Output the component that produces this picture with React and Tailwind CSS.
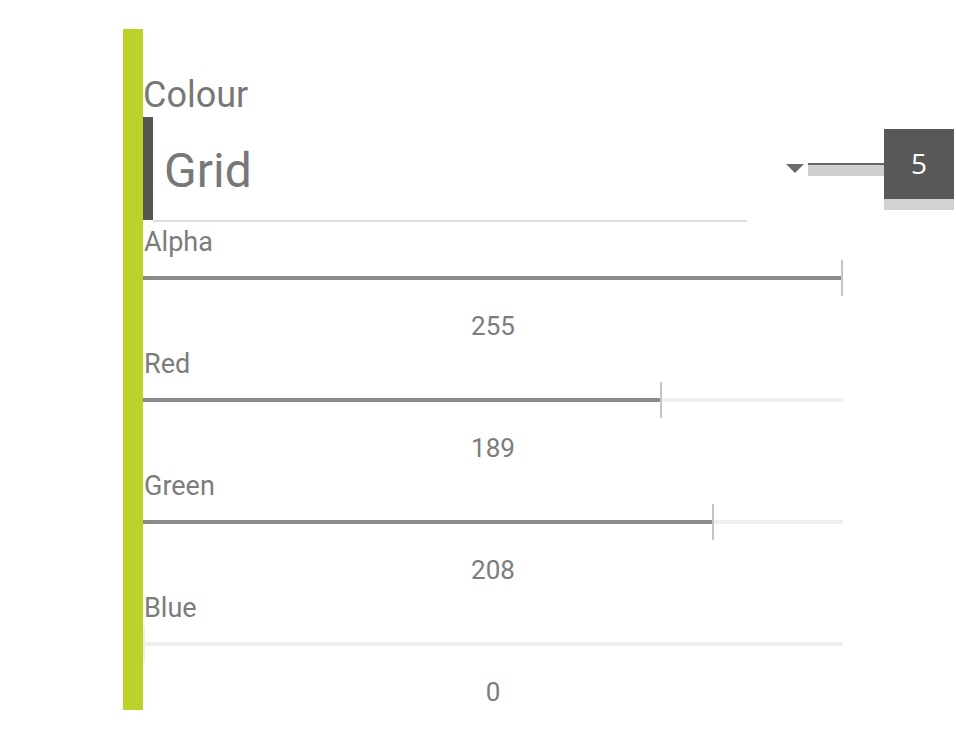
import React from 'react'

const channels = [
  { name: 'Alpha', value: 255 },
  { name: 'Red', value: 189 },
  { name: 'Green', value: 208 },
  { name: 'Blue', value: 0 },
]

function Slider({ name, value, first }) {
  const pos = Math.round((value / 255) * 698)
  return (
    <div className={first ? 'flex flex-col w-[700px] mt-[5px]' : 'flex flex-col w-[700px] mt-[8px]'}>
      <div className="h-[30px] leading-[30px] text-[27px] text-[#7c7c7c] pl-[1px]">{name}</div>
      <div className="relative h-[36px] mt-[3px]">
        <div className="absolute left-0 right-0 top-[16px] h-[4px] bg-[#efefef]" />
        <div className="absolute left-0 top-[16px] h-[4px] bg-[#8a8a8a]" style={{ width: pos }} />
        <div
          className={value === 0 ? 'absolute top-0 h-[36px] w-[2px] bg-[#ececec]' : 'absolute top-0 h-[36px] w-[2px] bg-[#c4c4c4]'}
          style={{ left: pos }}
        />
      </div>
      <div className="h-[30px] leading-[30px] mt-[15px] text-center text-[26px] text-[#7c7c7c]">{value}</div>
    </div>
  )
}

export default function App() {
  return (
    <div className="min-h-[742px] bg-white pt-[29px] pl-[123px] font-['Roboto',sans-serif]">
      <div className="flex">
        <div className="w-[20px] bg-[#bdd12d]" />
        <div className="flex flex-col pt-[45px] pb-[3px]">
          <div className="h-[42px] leading-[42px] text-[36px] text-[#777777]">Colour</div>

          {/* colour select + callout */}
          <div className="flex items-start mt-[1px]">
            <div className="w-[10px] h-[103px] bg-[#555656]" />
            <div className="w-[594px] h-[105px] border-b-2 border-[#dedede] pl-[11px] pt-[26px]">
              <span className="block leading-[56px] text-[48px] text-[#777777]">Grid</span>
            </div>
            <svg className="ml-[39px] mt-[47px]" width="18" height="9" viewBox="0 0 18 9">
              <path d="M0 0 L18 0 L9 9 Z" fill="#6b6b6b" />
            </svg>
            <div className="ml-[4px] mt-[46px] w-[76px] h-[13px] bg-[#cfcfcf] border-t-2 border-[#666666]" />
            <div className="mt-[12px] flex flex-col w-[70px]">
              <div className="h-[70px] bg-[#585858] flex items-center justify-center pb-[2px] text-white text-[28px] font-['Open_Sans',sans-serif]">
                5
              </div>
              <div className="h-[11px] bg-[#d2d2d2]" />
            </div>
          </div>

          {channels.map((c, i) => (
            <Slider key={c.name} name={c.name} value={c.value} first={i === 0} />
          ))}
        </div>
      </div>
    </div>
  )
}
